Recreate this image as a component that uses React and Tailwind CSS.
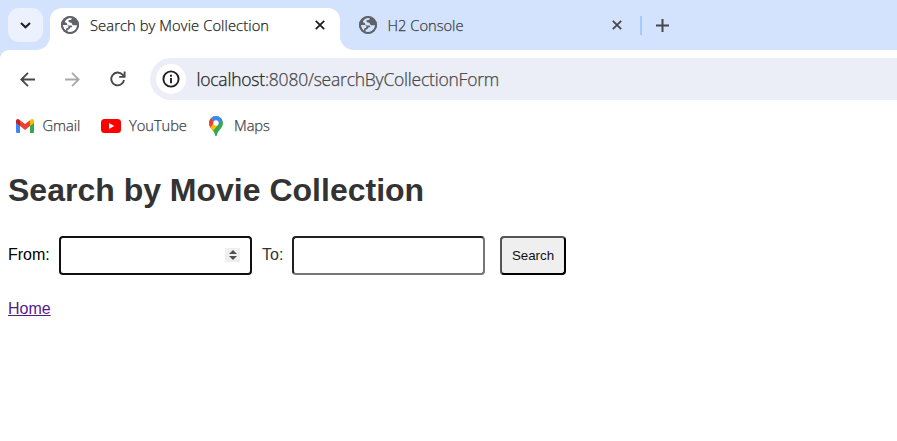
import React from "react";

const uiFont = "font-['Open_Sans','Noto_Sans',sans-serif] font-light [-webkit-text-stroke:0.25px_currentColor]";

function Globe({ bg }) {
  return (
    <svg width="18" height="18" viewBox="0 0 18 18" className="block shrink-0">
      <circle cx="9" cy="9" r="9" fill="#5f6368" />
      <path
        d="M11 1.900C10.800 3.500 9.600 3.900 8.400 4.100c-.9.200-1.200.8-.9 1.500.3.600.9.800 1.700.8 1.300.1 1.800.8 2 1.900.1.600.5.900 1.200.9h3.900c-.2 3.600-2.700 6.600-6.500 7.100-1.300.1-2.400-.1-3.300-.4v-1.500c0-.7.3-1 1-1 .9 0 1.200-.4 1.300-1.200.1-.6.500-.9 1.100-.9.900 0 1.300-.3 1.300-.9 0-.5-.4-.8-1.100-.8H8.400C6.900 9.600 6 8.800 5.900 7.500c0-.6-.4-.9-1.100-.9-.7 0-1-.4-.8-1C5 3.100 8 1.400 11 1.900z"
        fill={bg}
      />
      <path d="M1.900 9h3.300c1.400 0 2.200.7 2.200 1.700 0 .9-.5 1.300-1.300 1.400-.7.1-1 .5-1 1.300v1.300C3.100 13.600 1.900 11.500 1.900 9z" fill={bg} />
      <circle cx="9" cy="9" r="8" fill="none" stroke="#5f6368" strokeWidth="1.900" />
    </svg>
  );
}

function Cross({ color }) {
  return (
    <svg width="10" height="10" viewBox="0 0 10 10" className="block shrink-0">
      <path d="M.8.800l8.400 8.400M9.200.800L.8 9.200" stroke={color} strokeWidth="1.800" />
    </svg>
  );
}

function TabStrip() {
  return (
    <div className="flex h-[50px] bg-[#d3e3fd]">
      <div className="relative flex h-[50px] w-[50px] shrink-0 pl-2 pt-2">
        <button className="flex h-[34px] w-[35px] items-center justify-center rounded-[11px] bg-[#ebf1fd]">
          <svg width="11" height="7" viewBox="0 0 11 7">
            <path d="M1 1l4.500 4.300L10 1" fill="none" stroke="#1f1f1f" strokeWidth="2" />
          </svg>
        </button>
        <svg className="absolute bottom-0 right-0" width="14" height="14" viewBox="0 0 14 14">
          <path d="M14 0v14H0A14 14 0 0 0 14 0z" fill="#fff" />
        </svg>
      </div>
      <div className="mt-[8px] flex h-[42px] w-[290px] shrink-0 items-center rounded-t-[12px] bg-white pl-[11px] pr-[15px] pb-[8px]">
        <Globe bg="#fff" />
        <span className={`ml-[11px] flex-1 whitespace-nowrap text-[14.700px] leading-5 tracking-[0.100px] text-[#1f1f1f] ${uiFont}`}>
          Search by Movie Collection
        </span>
        <Cross color="#1f1f1f" />
      </div>
      <div className="relative mt-[8px] flex h-[42px] w-[301px] shrink-0 items-center pl-[19px] pr-[19px] pb-[8px]">
        <svg className="absolute bottom-0 left-0" width="14" height="14" viewBox="0 0 14 14">
          <path d="M0 0v14H14A14 14 0 0 1 0 0z" fill="#fff" />
        </svg>
        <Globe bg="#d3e3fd" />
        <span className={`ml-[10.500px] flex-1 whitespace-nowrap text-[14.700px] leading-5 text-[#3c4043] ${uiFont}`}>
          H2 Console
        </span>
        <Cross color="#474747" />
      </div>
      <div className="ml-[-1px] mt-[16px] h-[19px] w-[2px] shrink-0 bg-[#a8c7fa]" />
      <svg width="13" height="13" viewBox="0 0 13 13" className="ml-[14px] mt-[19px]">
        <path d="M6.500 0v13M0 6.500h13" stroke="#474747" strokeWidth="2" />
      </svg>
    </div>
  );
}

function Toolbar() {
  return (
    <div className="bg-[#d3e3fd]">
      <div className="flex h-[58px] items-center rounded-tl-[9px] bg-white pl-[20px]">
        <svg width="15" height="15" viewBox="0 0 15 15" fill="none" stroke="#474747" strokeWidth="1.800">
          <path d="M15 7.500H1.300M8 .8L1.300 7.500 8 14.200" />
        </svg>
        <svg width="15" height="15" viewBox="0 0 15 15" fill="none" stroke="#a9a9a9" strokeWidth="1.800" className="ml-[30px]">
          <path d="M0 7.500h13.700M7 .8l6.700 6.700L7 14.200" />
        </svg>
        <svg width="16" height="16" viewBox="0 0 16 16" fill="none" stroke="#474747" strokeWidth="1.900" className="ml-[30px]">
          <path d="M14 9A6.400 6.400 0 1 1 12.500 3.700L14.300 5.500" />
          <path d="M14.600.500v5.400H9.200" />
        </svg>
        <div className="ml-[24px] flex h-[42px] flex-1 items-center rounded-l-full bg-[#ebeef7] pl-[6px]">
          <div className="flex size-[30px] items-center justify-center rounded-full bg-white">
            <svg width="18" height="18" viewBox="0 0 18 18">
              <circle cx="9" cy="9" r="7.600" fill="none" stroke="#1f1f1f" strokeWidth="1.900" />
              <path d="M9 8v5.200M9 4.800v1.900" stroke="#1f1f1f" strokeWidth="1.900" />
            </svg>
          </div>
          <span className={`ml-[10.500px] whitespace-nowrap text-[17.500px] leading-6 tracking-[-0.220px] text-[#474747] ${uiFont}`}>
            <span className="text-[#1f1f1f]">localhost</span>:8080/searchByCollectionForm
          </span>
        </div>
      </div>
    </div>
  );
}

function Gmail() {
  return (
    <svg width="18" height="14" viewBox="0 0 18 14" className="block">
      <path d="M0 2v10.700C0 13.400.6 14 1.300 14H4V6z" fill="#4285f4" />
      <path d="M18 2v10.700c0 .7-.6 1.300-1.300 1.300H14V6z" fill="#34a853" />
      <path d="M14 1.200V7l4-3V2.100C18 .3 16-.6 14.600.700z" fill="#fbbc04" />
      <path d="M4 7V1.200l5 3.900 5-3.900V7l-5 3.900z" fill="#ea4335" />
      <path d="M0 2.100V4l4 3V1.200L3.400.700C2-.6 0 .3 0 2.100z" fill="#c5221f" />
    </svg>
  );
}

function YouTube() {
  return (
    <svg width="20" height="14" viewBox="0 0 20 14" className="block">
      <rect width="20" height="14" rx="3.500" fill="#f00" />
      <path d="M8 4l5.200 3L8 10z" fill="#fff" />
    </svg>
  );
}

function Maps() {
  return (
    <svg width="14" height="20" viewBox="0 0 14 20" className="block">
      <defs>
        <clipPath id="pin">
          <path d="M7 0a7 7 0 0 1 7 7c0 3.100-1.700 4.800-3.400 7-1.400 1.800-2.100 2.900-2.600 4.900-.2.700-.4 1.100-1 1.100s-.8-.4-1-1.100C5.500 16.900 4.800 15.800 3.400 14 1.700 11.800 0 10.100 0 7a7 7 0 0 1 7-7z" />
        </clipPath>
      </defs>
      <g clipPath="url(#pin)">
        <path d="M0 0h14v20H0z" fill="#34a853" />
        <path d="M0 1.500l1.800 1L7 7l-5.700 5.500H0z" fill="#ea4335" />
        <path d="M1 11.700L5 7l4.200 1.800-5.700 6.600z" fill="#fbbc04" />
        <path d="M1.700 2.500L4 0h5.200L13 3.400 9 8.800 7 7z" fill="#4285f4" />
      </g>
      <circle cx="7" cy="7" r="2.700" fill="#fff" />
    </svg>
  );
}

function Bookmarks() {
  const label = `mb-[2px] whitespace-nowrap text-[14.700px] leading-5 tracking-[-0.050px] text-[#3c4043] ${uiFont}`;
  return (
    <div className="flex h-[36px] items-center pl-[16px]">
      <Gmail />
      <span className={`ml-[8.500px] w-[58.500px] ${label}`}>Gmail</span>
      <YouTube />
      <span className={`ml-[8px] w-[80px] ${label}`}>YouTube</span>
      <Maps />
      <span className={`ml-[11px] ${label}`}>Maps</span>
    </div>
  );
}

function Page() {
  return (
    <main className="px-2 pt-[28px] font-['Liberation_Sans',Arial,sans-serif] text-base text-[#333]">
      <h1 className="whitespace-nowrap text-[32px] leading-[37px] font-bold">Search by Movie Collection</h1>
      <form className="mt-[27px] flex h-[39px] items-center">
        <label className="w-[51px] pb-[2px] text-black">From:</label>
        <div className="flex h-[39px] w-[193px] items-center justify-end rounded-[4px] border-2 border-[#101010] bg-white pr-[10px]">
          <div className="mb-[1px] flex h-[14px] w-[15px] items-center justify-center bg-[#efefef]">
            <svg width="8" height="10" viewBox="0 0 8 10" fill="#505050">
              <path d="M0 4l4-4 4 4zM0 6h8l-4 4z" />
            </svg>
          </div>
        </div>
        <label className="ml-[10px] w-[30px] pb-[2px]">To:</label>
        <div className="h-[39px] w-[193px] rounded-[4px] border-2 border-t-[#202020] border-l-[#202020] border-r-[#767676] border-b-[#767676] bg-white" />
        <button
          type="button"
          className="ml-[15px] h-[39px] w-[66px] rounded-[4px] border-2 border-t-[#555] border-l-[#555] border-r-black border-b-black bg-[#efefef] text-[13.333px] text-[#111]"
        >
          Search
        </button>
      </form>
      <div className="mt-[25px] leading-[18px]">
        <a className="text-[#551a8b] underline">Home</a>
      </div>
    </main>
  );
}

export default function App() {
  return (
    <div className="h-[441px] w-[897px] overflow-hidden bg-white">
      <TabStrip />
      <Toolbar />
      <Bookmarks />
      <Page />
    </div>
  );
}
